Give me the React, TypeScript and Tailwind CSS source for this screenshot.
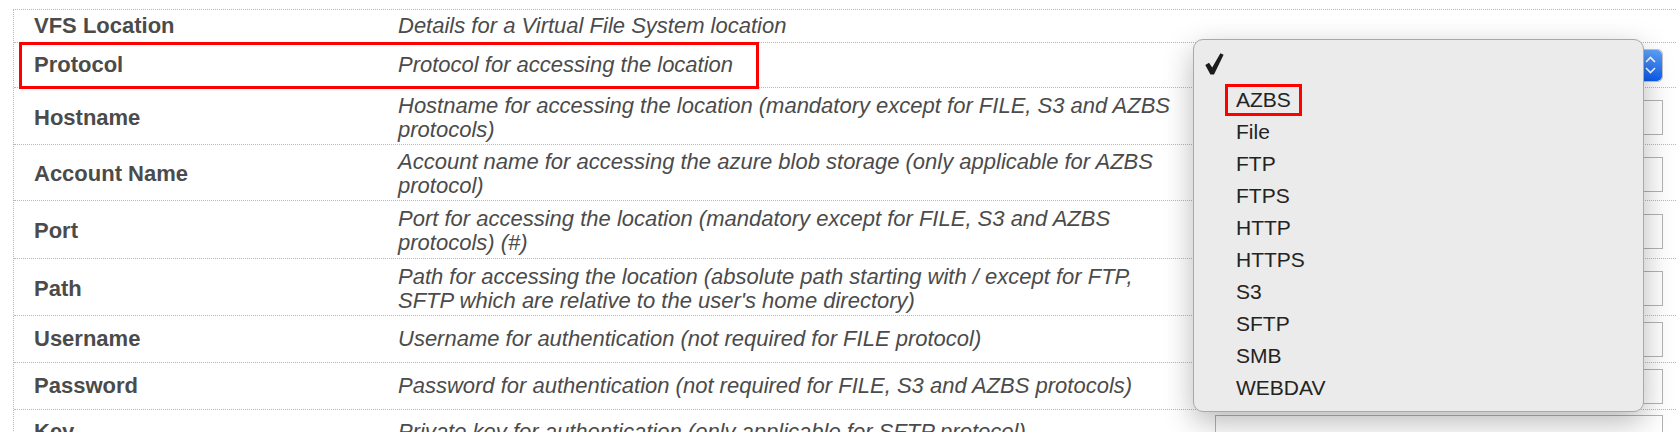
type Row = {
  label: string;
  lines: string[];
  height: string;
  value: "none" | "select" | "input";
  boxed?: boolean;
};

const rows: Row[] = [
  { label: "VFS Location", lines: ["Details for a Virtual File System location"], height: "h-[33px]", value: "none" },
  { label: "Protocol", lines: ["Protocol for accessing the location"], height: "h-[45px]", value: "select", boxed: true },
  {
    label: "Hostname",
    lines: ["Hostname for accessing the location (mandatory except for FILE, S3 and AZBS", "protocols)"],
    height: "h-[57px] pt-[3px]",
    value: "input",
  },
  {
    label: "Account Name",
    lines: ["Account name for accessing the azure blob storage (only applicable for AZBS", "protocol)"],
    height: "h-[56px] pt-[3px]",
    value: "input",
  },
  {
    label: "Port",
    lines: ["Port for accessing the location (mandatory except for FILE, S3 and AZBS", "protocols) (#)"],
    height: "h-[58px] pt-[3px]",
    value: "input",
  },
  {
    label: "Path",
    lines: [
      "Path for accessing the location (absolute path starting with / except for FTP,",
      "SFTP which are relative to the user's home directory)",
    ],
    height: "h-[57px] pt-[3px]",
    value: "input",
  },
  { label: "Username", lines: ["Username for authentication (not required for FILE protocol)"], height: "h-[47px]", value: "input" },
  {
    label: "Password",
    lines: ["Password for authentication (not required for FILE, S3 and AZBS protocols)"],
    height: "h-[47px]",
    value: "input",
  },
];

const protocols = ["AZBS", "File", "FTP", "FTPS", "HTTP", "HTTPS", "S3", "SFTP", "SMB", "WEBDAV"];

function Check() {
  return (
    <svg width="19" height="22" viewBox="0 0 19 22" className="mt-[1px]">
      <path d="M0.3 12 L4 9.8 L7.2 14.6 L15.4 0.3 L18.6 1.8 L9 21.6 L5.4 21.6 Z" fill="#1c1c1c" />
    </svg>
  );
}

function Stepper() {
  return (
    <div className="flex h-full w-[24px] flex-col items-center justify-center gap-[4px] rounded-r-[5px] bg-gradient-to-b from-[#5ea0f8] to-[#0a5cf1]">
      <svg width="11" height="7" viewBox="0 0 11 7">
        <path d="M1 6 L5.5 1.5 L10 6" stroke="#fff" strokeWidth="1.6" fill="none" />
      </svg>
      <svg width="11" height="7" viewBox="0 0 11 7">
        <path d="M1 1 L5.5 5.5 L10 1" stroke="#fff" strokeWidth="1.6" fill="none" />
      </svg>
    </div>
  );
}

export default function App() {
  return (
    <div className="relative h-[432px] w-[1676px] overflow-hidden bg-white font-['Liberation_Sans',Arial,sans-serif] text-[22px] text-[#4b4b4b]">
      <div className="ml-[13px] mt-[9px] border-l border-t border-dotted border-[#b8b8b8]">
        {rows.map((row) => (
          <div key={row.label} className={`relative flex items-center border-b border-dotted border-[#b8b8b8] ${row.height}`}>
            <div className="w-[384px] shrink-0 pl-[20px] font-bold leading-[24px]">{row.label}</div>
            <div className="w-[817px] shrink-0 italic leading-[24px]">
              {row.lines.map((line) => (
                <div key={line} className="whitespace-nowrap">
                  {line}
                </div>
              ))}
            </div>
            {row.value === "input" && <div className="h-[35px] w-[448px] shrink-0 border border-[#b3b3b3] bg-white" />}
            {row.value === "select" && (
              <div className="flex h-[33px] w-[448px] shrink-0 justify-end rounded-[5px] border border-[#c4c4c4] bg-white">
                <Stepper />
              </div>
            )}
            {row.boxed && (
              <div className="pointer-events-none absolute -top-[1px] left-[5px] h-[47px] w-[740px] border-[3px] border-[#ff0000]" />
            )}
          </div>
        ))}
        <div className="flex h-[57px] items-start">
          <div className="w-[384px] shrink-0 pl-[20px] pt-[10px] font-bold leading-[24px]">Key</div>
          <div className="w-[817px] shrink-0 pt-[10px] italic leading-[24px]">
            <div className="whitespace-nowrap">Private key for authentication (only applicable for SFTP protocol)</div>
          </div>
          <div className="mt-[5px] h-[35px] w-[448px] shrink-0 border border-[#b3b3b3] bg-white" />
        </div>
      </div>

      <div className="absolute left-[1193px] top-[39px] h-[373px] w-[451px] rounded-[10px] border border-[#a9a9a9] bg-[#ebebeb] pb-[8px] pt-[12px] text-[21px] text-[#232323] shadow-[0_10px_30px_rgba(0,0,0,0.28)]">
        <div className="flex h-[32px] items-start pl-[11px]">
          <Check />
        </div>
        {protocols.map((p) => (
          <div key={p} className="flex h-[32px] items-center pl-[42px]">
            {p === "AZBS" ? (
              <span className="-ml-[11px] h-[32px] border-[3px] border-[#ff0000] px-[8px] leading-[26px]">{p}</span>
            ) : (
              <span className="leading-[32px]">{p}</span>
            )}
          </div>
        ))}
      </div>
    </div>
  );
}
